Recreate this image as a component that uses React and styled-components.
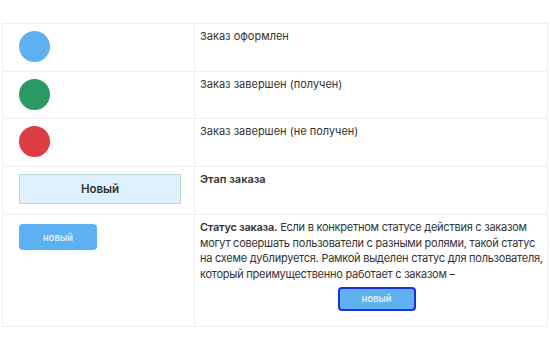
import React from 'react';
import styled, { createGlobalStyle } from 'styled-components';

const GlobalStyle = createGlobalStyle`
    body {
        margin: 0;
        background: #fff;
        font-family: Inter, "Noto Sans", sans-serif;
        color: #333;
    }
`;

const Page = styled.div`
    padding: 23px 2px 0 2px;
`;

const Table = styled.table`
    width: 546px;
    border-collapse: collapse;
    table-layout: fixed;
`;

const Row = styled.tr`
    height: ${props => props.h || 48}px;
`;

const MarkCell = styled.td`
    width: 192px;
    border: 1px solid #efefef;
    padding: 7px 16px;
    vertical-align: top;
    box-sizing: border-box;
`;

const TextCell = styled.td`
    border: 1px solid #efefef;
    padding: 5px 4px 14px 5px;
    vertical-align: top;
    font-size: 11px;
    line-height: 15.5px;
    color: #333;
`;

const Paragraph = styled.div`
    letter-spacing: -0.25px;
    white-space: nowrap;
`;

const Dot = styled.div`
    width: 31px;
    height: 31px;
    border-radius: 50%;
    background: ${props => props.color};
`;

const StageBox = styled.div`
    width: 162px;
    height: 30px;
    box-sizing: border-box;
    display: flex;
    align-items: center;
    justify-content: center;
    background: #dff0fd;
    border: 1px solid #b6dcd6;
    font-size: 11.5px;
    font-weight: 600;
    color: #333;
`;

const StatusButton = styled.div`
    width: 78px;
    height: ${props => props.framed ? 24 : 26}px;
    box-sizing: border-box;
    display: flex;
    align-items: center;
    justify-content: center;
    background: #5eb1f1;
    border-radius: 4px;
    border: ${props => props.framed ? '2px solid #1f2fd8' : 'none'};
    color: #eef6fe;
    font-size: 9.5px;
    font-weight: 500;
    letter-spacing: 0;
    margin-top: ${props => props.framed ? '5px' : '2px'};
`;

const Centered = styled.div`
    display: flex;
    justify-content: center;
    padding-left: 10px;
`;

const Bold = styled.b`
    font-weight: 600;
`;

export default function App() {
    return (
        <>
            <GlobalStyle />
            <Page>
                <Table>
                    <tbody>
                        <Row>
                            <MarkCell><Dot color="#5fb0f0" /></MarkCell>
                            <TextCell>Заказ оформлен</TextCell>
                        </Row>
                        <Row h={47}>
                            <MarkCell><Dot color="#289a62" /></MarkCell>
                            <TextCell>Заказ завершен (получен)</TextCell>
                        </Row>
                        <Row>
                            <MarkCell><Dot color="#dc3d43" /></MarkCell>
                            <TextCell>Заказ завершен (не получен)</TextCell>
                        </Row>
                        <Row>
                            <MarkCell><StageBox>Новый</StageBox></MarkCell>
                            <TextCell><Bold>Этап заказа</Bold></TextCell>
                        </Row>
                        <Row h={112}>
                            <MarkCell><StatusButton>новый</StatusButton></MarkCell>
                            <TextCell>
                                <Paragraph>
                                    <Bold>Статус заказа.</Bold> Если в конкретном статусе действия с заказом<br />
                                    могут совершать пользователи с разными ролями, такой статус<br />
                                    на схеме дублируется. Рамкой выделен статус для пользователя,<br />
                                    который преимущественно работает с заказом –
                                </Paragraph>
                                <Centered><StatusButton framed>новый</StatusButton></Centered>
                            </TextCell>
                        </Row>
                    </tbody>
                </Table>
            </Page>
        </>
    );
}
